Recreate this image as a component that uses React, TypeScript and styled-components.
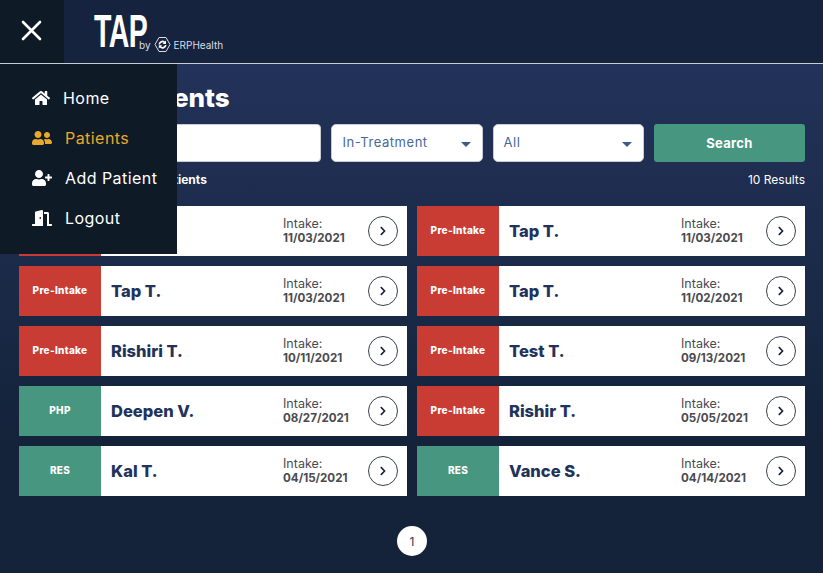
import React, { FC } from 'react';
import styled, { createGlobalStyle } from 'styled-components';
import { FaChevronRight, FaDoorOpen, FaHome, FaUserFriends, FaUserPlus } from 'react-icons/fa';

const GlobalStyle = createGlobalStyle`
  html, body {
    margin: 0;
    padding: 0;
    height: 100%;
    overflow: hidden;
    background: #14233a;
    font-family: 'Inter', 'Noto Sans', sans-serif;
  }
`;

const Page = styled.div`
  position: relative;
  width: 823px;
  height: 573px;
  overflow: hidden;
  background: linear-gradient(180deg, #22325a 64px, #1e2d4e 200px, #14233a 440px);
`;

const Header = styled.header`
  display: flex;
  height: 63px;
  background: #16233f;
  border-bottom: 1px solid #c9ccd3;
`;

const CloseBox = styled.button`
  display: flex;
  align-items: center;
  justify-content: center;
  width: 64px;
  height: 63px;
  padding: 0 1px 2px 0;
  border: none;
  background: #0f1a27;
`;

const Logo = styled.div`
  display: flex;
  align-items: flex-end;
  height: 47px;
  margin-left: 30px;
  color: #fff;
`;

const LogoMark = styled.span`
  display: block;
  width: 51px;
  font-family: 'Liberation Sans', sans-serif;
  font-weight: 700;
  font-size: 46px;
  line-height: 38px;
  height: 35px;
  letter-spacing: -1px;
  transform: scaleX(0.62);
  transform-origin: left bottom;
  white-space: nowrap;
`;

const LogoBy = styled.span`
  display: flex;
  align-items: center;
  gap: 3px;
  margin: 0 0 -6px -6px;
  font-size: 10px;
  line-height: 16px;
  color: #d9dde5;
`;

const Menu = styled.nav`
  position: absolute;
  top: 64px;
  left: 0;
  z-index: 2;
  display: flex;
  flex-direction: column;
  gap: 10px;
  box-sizing: border-box;
  width: 177px;
  height: 190px;
  padding: 19px 0 0 32px;
  background: #0f1a27;
`;

const MenuItem = styled.a<{ $active?: boolean }>`
  display: flex;
  align-items: center;
  gap: 13px;
  height: 30px;
  font-size: 16px;
  letter-spacing: 0.45px;
  white-space: nowrap;
  color: ${({ $active }) => ($active ? '#eaa92c' : '#fff')};
`;

const Content = styled.main`
  padding: 19px 18px 0 19px;
`;

const Title = styled.h1`
  margin: 0;
  height: 41px;
  font-size: 26px;
  line-height: 30px;
  font-weight: 800;
  color: #fff;
  white-space: nowrap;
`;

const Filters = styled.div`
  display: grid;
  grid-template-columns: 2fr 1fr 1fr 1fr;
  gap: 10px;
  height: 38px;
`;

const SearchInput = styled.div`
  box-sizing: border-box;
  background: #fff;
  border: 1px solid #c9ccd3;
  border-radius: 4px;
`;

const Select = styled.div`
  display: flex;
  align-items: center;
  justify-content: space-between;
  box-sizing: border-box;
  padding: 0 11px 2px 10px;
  background: #fff;
  border: 1px solid #c9ccd3;
  border-radius: 5px;
  font-size: 13px;
  letter-spacing: 0.55px;
  color: #4a6795;
`;

const Caret = styled.span`
  width: 0;
  height: 0;
  margin-top: 5px;
  border-left: 5px solid transparent;
  border-right: 5px solid transparent;
  border-top: 5px solid #3d5c8e;
`;

const SearchButton = styled.button`
  border: none;
  border-radius: 3px;
  background: #47967f;
  color: #fff;
  font-family: inherit;
  font-size: 13px;
  font-weight: 700;
  letter-spacing: 0.3px;
`;

const Summary = styled.div`
  display: flex;
  align-items: center;
  justify-content: space-between;
  height: 34px;
  margin-bottom: 10px;
  font-size: 12px;
  color: #fff;
`;

const SummaryLeft = styled.span`
  padding-left: 70px;
  font-weight: 700;
`;

const Cards = styled.div`
  display: grid;
  grid-template-columns: 388px 388px;
  gap: 10px;
`;

const Card = styled.div`
  display: flex;
  align-items: center;
  height: 50px;
  background: #fff;
`;

const Badge = styled.div<{ $kind: 'red' | 'green' }>`
  display: flex;
  align-items: center;
  justify-content: center;
  width: 82px;
  height: 100%;
  margin-right: 10px;
  flex: none;
  background: ${({ $kind }) => ($kind === 'red' ? '#c93c34' : '#47967f')};
  color: #fff;
  font-size: 10px;
  font-weight: 800;
  letter-spacing: 0.3px;
  padding-bottom: 2px;
  box-sizing: border-box;
`;

const Name = styled.div`
  flex: 1;
  padding-bottom: 1px;
  font-size: 16.5px;
  font-weight: 800;
  color: #22325a;
`;

const Intake = styled.div`
  width: 85px;
  font-size: 12.5px;
  line-height: 14px;
  color: #4a4a4f;
`;

const IntakeDate = styled.div`
  font-size: 11.6px;
  font-weight: 700;
`;

const Arrow = styled.div`
  display: flex;
  align-items: center;
  justify-content: center;
  box-sizing: border-box;
  width: 30px;
  height: 30px;
  margin-right: 9px;
  flex: none;
  border: 1px solid #3a3f4a;
  border-radius: 50%;
  color: #14233a;
`;

const Pagination = styled.div`
  display: flex;
  justify-content: center;
  margin-top: 30px;
`;

const PageDot = styled.div`
  display: flex;
  align-items: center;
  justify-content: center;
  width: 30px;
  height: 30px;
  border-radius: 50%;
  background: #fff;
  color: #2d3a52;
  font-size: 12px;
`;

type Patient = { status: string; kind: 'red' | 'green'; name: string; date: string };

const patients: Patient[] = [
  { status: 'Pre-Intake', kind: 'red', name: 'Tap T.', date: '11/03/2021' },
  { status: 'Pre-Intake', kind: 'red', name: 'Tap T.', date: '11/03/2021' },
  { status: 'Pre-Intake', kind: 'red', name: 'Tap T.', date: '11/03/2021' },
  { status: 'Pre-Intake', kind: 'red', name: 'Tap T.', date: '11/02/2021' },
  { status: 'Pre-Intake', kind: 'red', name: 'Rishiri T.', date: '10/11/2021' },
  { status: 'Pre-Intake', kind: 'red', name: 'Test T.', date: '09/13/2021' },
  { status: 'PHP', kind: 'green', name: 'Deepen V.', date: '08/27/2021' },
  { status: 'Pre-Intake', kind: 'red', name: 'Rishir T.', date: '05/05/2021' },
  { status: 'RES', kind: 'green', name: 'Kal T.', date: '04/15/2021' },
  { status: 'RES', kind: 'green', name: 'Vance S.', date: '04/14/2021' },
];

const ErpMark: FC = () => (
  <svg width="17" height="17" viewBox="0 0 17 17" fill="none">
    <path d="M5 1.5h7l4 7-4 7H5l-4-7z" stroke="#d9dde5" strokeWidth="1" />
    <path d="M4.5 8.5a4 4 0 0 1 6.5-3l1-1v3.4H8.6l1.2-1.2A2.6 2.6 0 0 0 6 8.5z" fill="#fff" />
    <path d="M12.5 9a4 4 0 0 1-6.7 2.6l-1 1V9.2h3.4L7 10.4A2.6 2.6 0 0 0 11 9z" fill="#fff" />
  </svg>
);

const App: FC = () => (
  <Page>
    <GlobalStyle />
    <Header>
      <CloseBox aria-label="Close menu">
        <svg width="21" height="21" viewBox="0 0 21 21">
          <path d="M2 2l17 17M19 2L2 19" stroke="#fff" strokeWidth="2.6" strokeLinecap="round" />
        </svg>
      </CloseBox>
      <Logo>
        <LogoMark>TAP</LogoMark>
        <LogoBy>
          by
          <ErpMark />
          ERPHealth
        </LogoBy>
      </Logo>
    </Header>
    <Menu>
      <MenuItem><FaHome size={18} />Home</MenuItem>
      <MenuItem $active><FaUserFriends size={20} />Patients</MenuItem>
      <MenuItem><FaUserPlus size={20} />Add Patient</MenuItem>
      <MenuItem><FaDoorOpen size={20} />Logout</MenuItem>
    </Menu>
    <Content>
      <Title>Current Patients</Title>
      <Filters>
        <SearchInput />
        <Select>In-Treatment<Caret /></Select>
        <Select>All<Caret /></Select>
        <SearchButton>Search</SearchButton>
      </Filters>
      <Summary>
        <SummaryLeft>Showing 10 Patients</SummaryLeft>
        <span>10 Results</span>
      </Summary>
      <Cards>
        {patients.map((p, i) => (
          <Card key={i}>
            <Badge $kind={p.kind}>{p.status}</Badge>
            <Name>{p.name}</Name>
            <Intake>
              Intake:
              <IntakeDate>{p.date}</IntakeDate>
            </Intake>
            <Arrow><FaChevronRight size={10} /></Arrow>
          </Card>
        ))}
      </Cards>
      <Pagination>
        <PageDot>1</PageDot>
      </Pagination>
    </Content>
  </Page>
);

export default App;
